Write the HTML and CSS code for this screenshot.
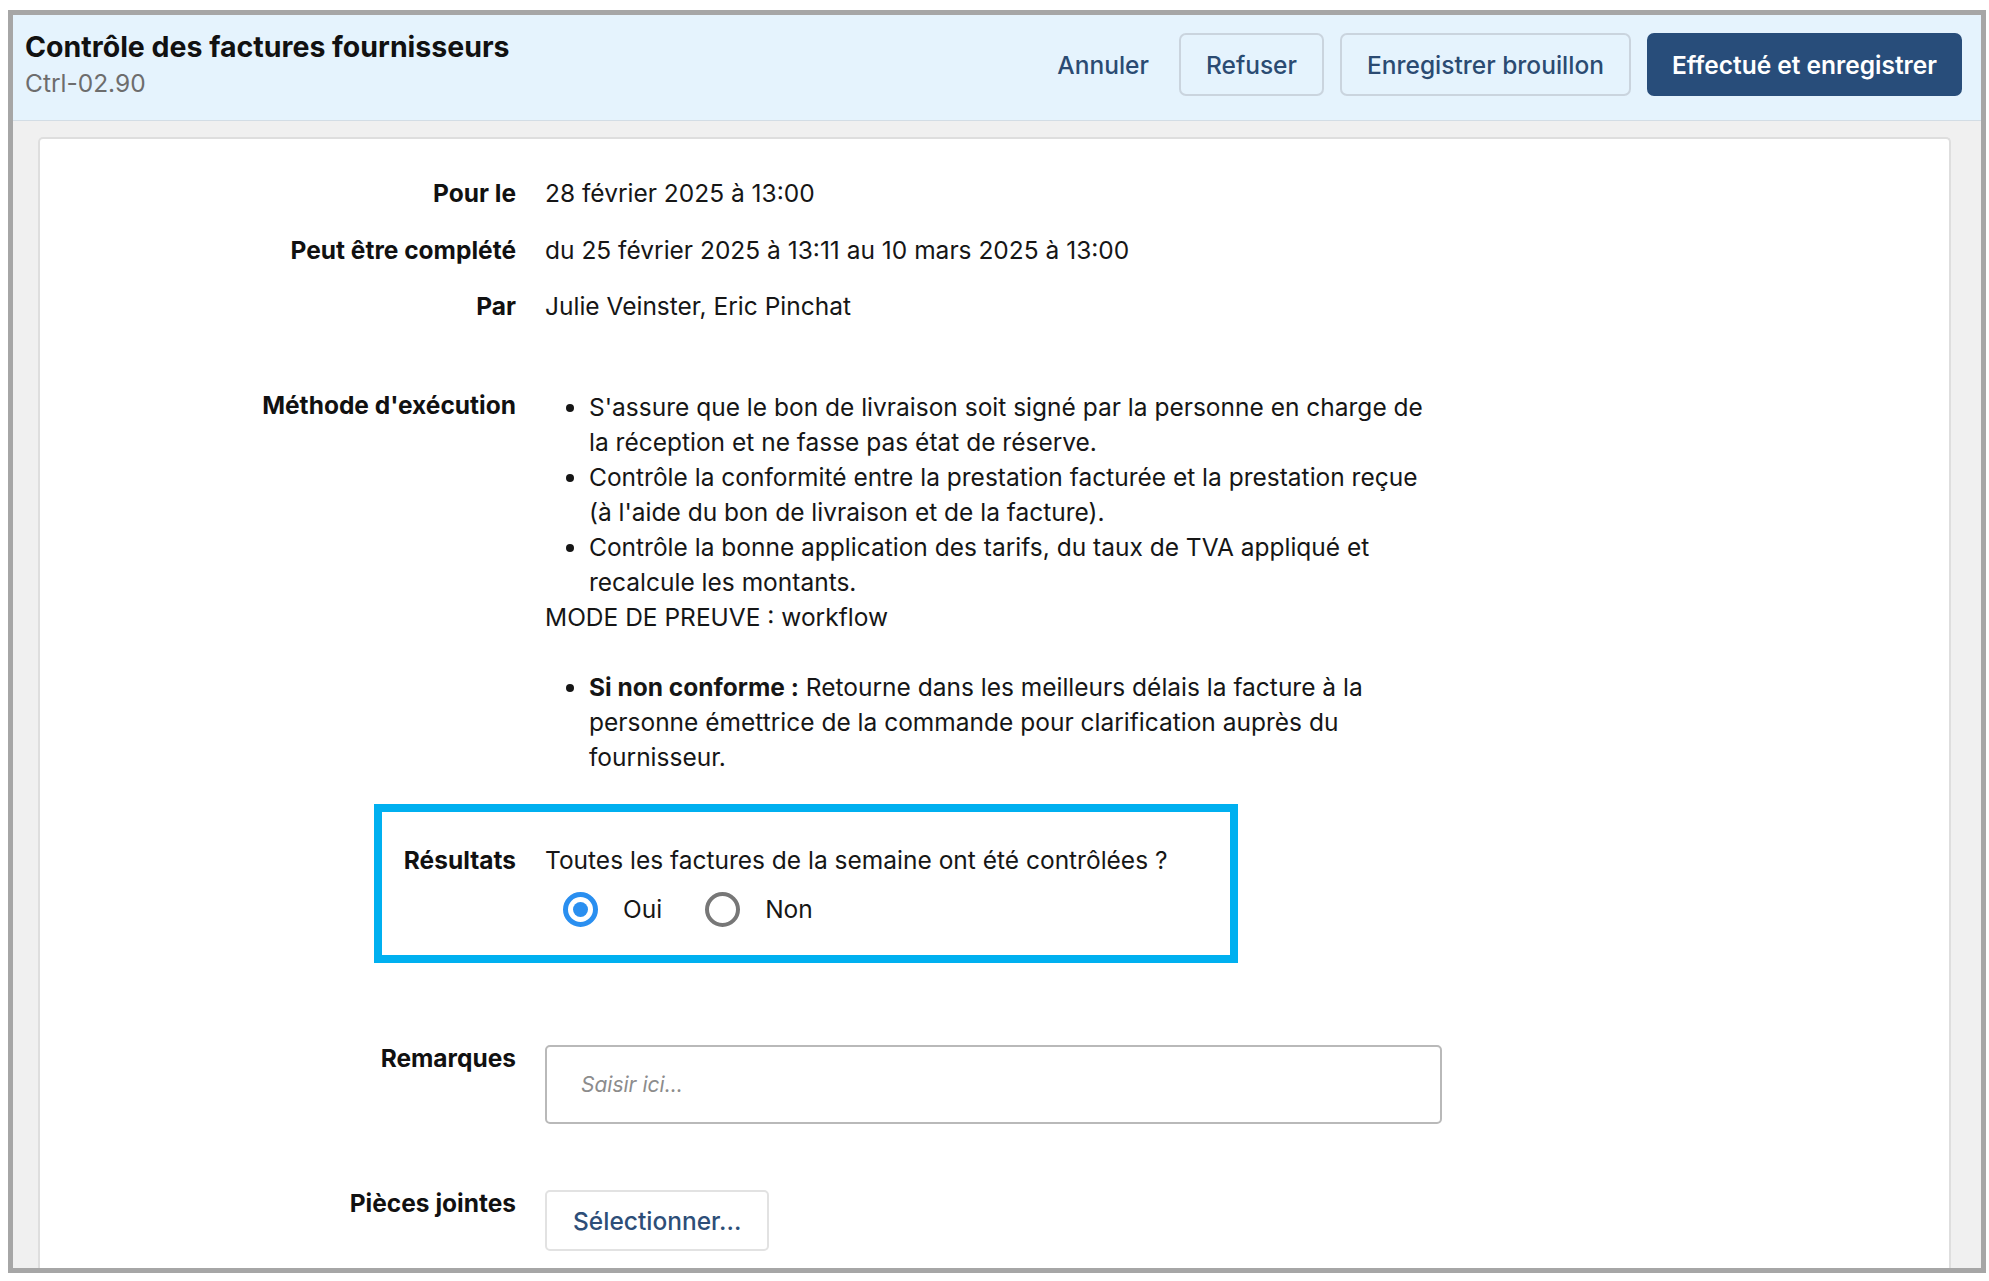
FILE: index.html
```html
<!DOCTYPE html>
<html lang="fr">
<head>
    <meta charset="UTF-8">
    <meta name="viewport" content="width=device-width, initial-scale=1.0">
    <title>Contrôle des factures fournisseurs</title>
    <link rel="stylesheet" href="styles.css">
</head>
<body>

<div class="frame">
    <!-- Header -->
    <div class="header">
        <div class="header-title">
            <div class="title">Contrôle des factures fournisseurs</div>
            <div class="subtitle">Ctrl-02.90</div>
        </div>
        <div class="actions">
            <button type="button" class="btn btn-link">Annuler</button>
            <button type="button" class="btn btn-outline">Refuser</button>
            <button type="button" class="btn btn-outline">Enregistrer brouillon</button>
            <button type="button" class="btn btn-primary">Effectué et enregistrer</button>
        </div>
    </div>

    <!-- Form card -->
    <div class="card">
        <div class="row">
            <div class="label">Pour le</div>
            <div class="value">28 février 2025 à 13:00</div>
        </div>
        <div class="row">
            <div class="label">Peut être complété</div>
            <div class="value">du 25 février 2025 à 13:11 au 10 mars 2025 à 13:00</div>
        </div>
        <div class="row">
            <div class="label">Par</div>
            <div class="value">Julie Veinster, Eric Pinchat</div>
        </div>

        <div class="row row-method">
            <div class="label">Méthode d'exécution</div>
            <div class="value method-value">
                <ul class="method-list">
                    <li>S'assure que le bon de livraison soit signé par la personne en charge de la réception et ne fasse pas état de réserve.</li>
                    <li>Contrôle la conformité entre la prestation facturée et la prestation reçue (à l'aide du bon de livraison et de la facture).</li>
                    <li>Contrôle la bonne application des tarifs, du taux de TVA appliqué et recalcule les montants.</li>
                </ul>
                <div>MODE DE PREUVE : workflow</div>
                <ul class="method-list method-list-gap">
                    <li><strong>Si non conforme :</strong> Retourne dans les meilleurs délais la facture à la personne émettrice de la commande pour clarification auprès du fournisseur.</li>
                </ul>
            </div>
        </div>

        <!-- Results (highlighted) -->
        <div class="results">
            <div class="row">
                <div class="label">Résultats</div>
                <div class="value">
                    <div>Toutes les factures de la semaine ont été contrôlées ?</div>
                    <div class="radios">
                        <label class="radio">
                            <span class="radio-dot checked"></span>
                            <span>Oui</span>
                        </label>
                        <label class="radio">
                            <span class="radio-dot"></span>
                            <span>Non</span>
                        </label>
                    </div>
                </div>
            </div>
        </div>

        <div class="row row-remarks">
            <div class="label">Remarques</div>
            <div class="value">
                <input type="text" class="text-input" placeholder="Saisir ici...">
            </div>
        </div>

        <div class="row row-files">
            <div class="label">Pièces jointes</div>
            <div class="value">
                <button type="button" class="btn-select">Sélectionner...</button>
            </div>
        </div>
    </div>
</div>

</body>
</html>
```

FILE: styles.css
```css
body {
    margin: 0;
    background: #ffffff;
    font-family: Inter, "Noto Sans", sans-serif;
    color: #161616;
}

.frame {
    box-sizing: border-box;
    width: 1978px;
    height: 1263px;
    margin: 10px 0 0 8px;
    border: 5px solid #a6a6a6;
    background: #f0f0f0;
    overflow: hidden;
    display: flex;
    flex-direction: column;
}

/* Header */
.header {
    box-sizing: border-box;
    height: 106px;
    flex-shrink: 0;
    display: flex;
    align-items: flex-start;
    justify-content: space-between;
    padding: 0 19px 0 12px;
    background: #e5f3fd;
    border-bottom: 1px solid #d3dde5;
}
.header-title {
    padding-top: 13px;
}
.title {
    font-size: 28.5px;
    font-weight: 700;
    line-height: 37px;
    color: #111111;
}
.subtitle {
    font-size: 24.5px;
    line-height: 35px;
    margin-top: 1px;
    color: #6d6d6d;
}
.actions {
    display: flex;
    align-items: center;
    gap: 16px;
    padding-top: 18px;
}
.btn {
    height: 63px;
    padding: 0 25px;
    font-family: Inter, "Noto Sans", sans-serif;
    font-size: 24.5px;
    font-weight: 500;
    border-radius: 7px;
    cursor: pointer;
}
.btn-link {
    background: transparent;
    border: none;
    color: #2b4b72;
    padding: 0 14px;
}
.btn-outline {
    background: #e5f3fd;
    border: 2px solid #cad4de;
    color: #2b4b72;
}
.btn-primary {
    background: #284d7a;
    border: 2px solid #284d7a;
    color: #ffffff;
    font-weight: 600;
    padding: 0 23px;
}

/* Card */
.card {
    flex: 1;
    margin: 16px 30px 0 25px;
    padding-top: 37px;
    background: #ffffff;
    border: 2px solid #dedede;
    border-bottom: none;
    border-radius: 5px 5px 0 0;
}
.row {
    display: flex;
    align-items: flex-start;
    font-size: 24.5px;
    line-height: 35px;
    margin-bottom: 21.5px;
}
.label {
    width: 476px;
    flex-shrink: 0;
    text-align: right;
    font-weight: 700;
    color: #111111;
}
.value {
    margin-left: 29px;
    width: 897px;
}
.row-method {
    margin-top: 64px;
    margin-bottom: 0;
}
.method-value {
    padding-top: 2px;
}
.method-list {
    margin: 0;
    padding-left: 44px;
}
.method-list-gap {
    margin-top: 35px;
}

/* Highlighted results */
.results {
    width: 848px;
    margin: 29px 0 0 334px;
    padding: 31px 0 28px;
    border: 8px solid #00b0f0;
}
.results .row {
    margin: 0;
}
.results .label {
    width: 134px;
}
.results .value {
    width: auto;
}
.radios {
    display: flex;
    align-items: center;
    margin-top: 14px;
    padding-left: 18px;
    gap: 43px;
}
.radio {
    display: flex;
    align-items: center;
    gap: 25px;
}
.radio-dot {
    box-sizing: border-box;
    width: 35px;
    height: 35px;
    border: 4px solid #777777;
    border-radius: 50%;
    display: flex;
    align-items: center;
    justify-content: center;
}
.radio-dot.checked {
    border: 5px solid #2a8ff0;
}
.radio-dot.checked::after {
    content: "";
    width: 15px;
    height: 15px;
    border-radius: 50%;
    background: #2a8ff0;
}

/* Remarks & attachments */
.row-remarks {
    margin-top: 78px;
    margin-bottom: 0;
}
.text-input {
    box-sizing: border-box;
    width: 897px;
    height: 79px;
    margin-top: 4px;
    padding: 0 34px;
    border: 2px solid #b9b9b9;
    border-radius: 5px;
    font-family: Inter, "Noto Sans", sans-serif;
    font-size: 21px;
    display: block;
}
.text-input::placeholder {
    color: #8c8c8c;
    font-style: italic;
}
.row-files {
    margin-top: 62px;
}
.btn-select {
    height: 61px;
    margin-top: 4px;
    padding: 0 26px;
    background: #ffffff;
    border: 2px solid #e2e2e2;
    border-radius: 5px;
    font-family: Inter, "Noto Sans", sans-serif;
    font-size: 24.5px;
    font-weight: 500;
    color: #2d4e78;
}
```
